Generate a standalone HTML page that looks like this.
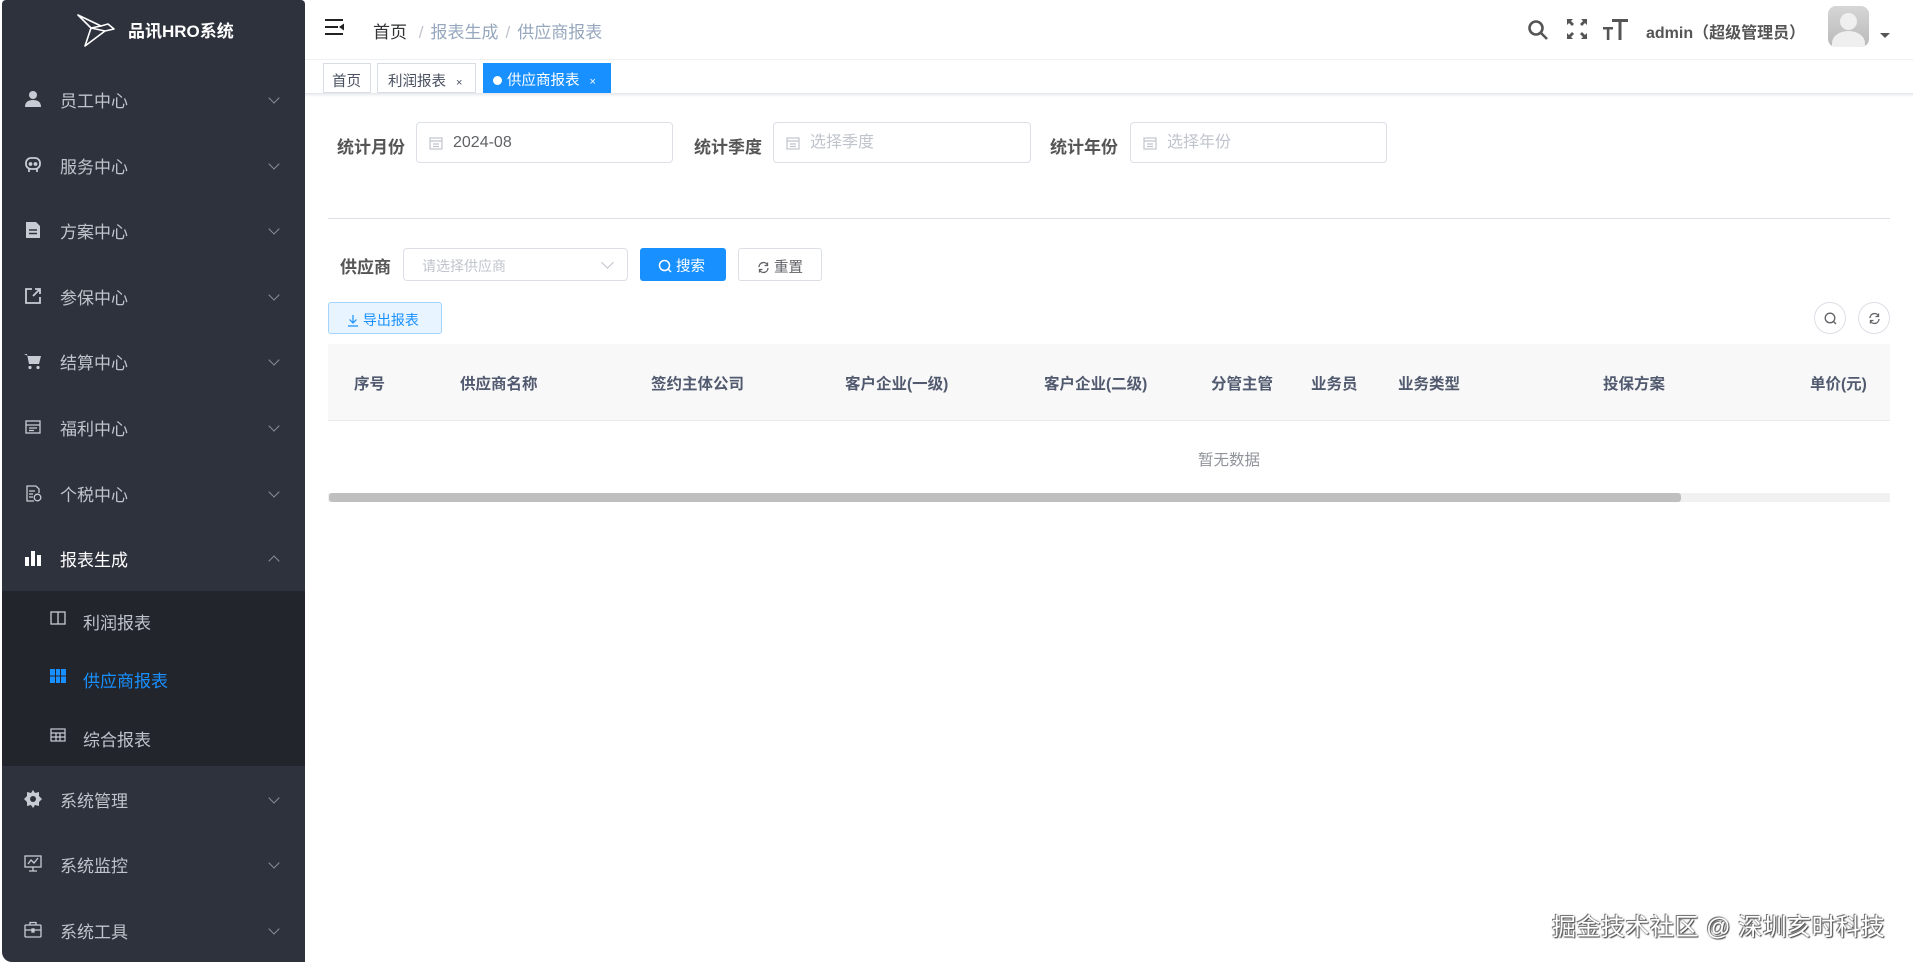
<!DOCTYPE html>
<html><head><meta charset="utf-8"><style>
*{box-sizing:border-box;margin:0;padding:0}
body{width:1913px;height:962px;overflow:hidden;background:#fff;font-family:"Liberation Sans","Noto Sans CJK SC",sans-serif;position:relative}
.a{position:absolute}
#sb{left:2px;top:0;width:303px;height:962px;background:#2e323d;border-radius:4px 4px 0 10px}
.mi{position:absolute;left:0;width:303px;height:66px;color:#bfc4cc;font-size:17px;display:flex;align-items:center}
.mi .ic{position:absolute;left:22px;top:24px;width:18px;height:18px}
.mi .t{position:absolute;left:58px}
.mi .ch{position:absolute;left:268px;top:28px;width:8px;height:8px;border-right:1.3px solid #8a909a;border-bottom:1.3px solid #8a909a;transform:rotate(45deg)}
.sub{position:absolute;left:0;width:303px;height:58px;color:#bfc4cc;font-size:17px}
.sub .t{position:absolute;left:81px;top:18px}
.lbl{font-size:17px;font-weight:bold;color:#555}
.inp{border:1px solid #dcdfe6;border-radius:4px;height:41px;font-size:16px;color:#606266}
.inp .v{position:absolute;left:36px;top:0;line-height:39px}
.th{position:absolute;top:372px;font-size:15.5px;font-weight:bold;color:#515a6e}
</style></head><body>
<div id="sb" class="a">
 <svg class="a" style="left:73px;top:12px" width="40" height="36" viewBox="0 0 40 36" fill="none" stroke="#fff" stroke-width="1.6" stroke-linejoin="round"><path d="M3 3 L26 14 L33 12 L39 17 L30 19 L10 34 L16 16 Z M3 3 L16 16 L26 14 M16 16 L30 19"/></svg>
 <div class="a" style="left:126px;top:17px;color:#fff;font-size:17px;font-weight:bold">品讯HRO系统</div>

 <div class="mi" style="top:66px"><svg class="ic" viewBox="0 0 18 18" fill="#c7ccd4"><circle cx="9" cy="5" r="4"/><path d="M1 17 Q1 10 9 10 Q17 10 17 17Z"/></svg><span class="t">员工中心</span><i class="ch"></i></div>
 <div class="mi" style="top:132px"><svg class="ic" viewBox="0 0 18 18" fill="none" stroke="#c7ccd4" stroke-width="1.8"><rect x="2" y="2" width="14" height="11" rx="5"/><path d="M5 16 L5 13 M13 16 L13 13"/><circle cx="6.5" cy="8" r="1" fill="#c7ccd4"/><circle cx="11.5" cy="8" r="1" fill="#c7ccd4"/></svg><span class="t">服务中心</span><i class="ch"></i></div>
 <div class="mi" style="top:197px"><svg class="ic" viewBox="0 0 18 18" fill="#c7ccd4"><path d="M2 1 L12 1 L16 5 L16 17 L2 17Z"/><path d="M5 9 H13 M5 12.5 H13" stroke="#2e323d" stroke-width="1.6"/></svg><span class="t">方案中心</span><i class="ch"></i></div>
 <div class="mi" style="top:263px"><svg class="ic" viewBox="0 0 18 18" fill="none" stroke="#c7ccd4" stroke-width="1.8"><path d="M8 2 H2 V16 H16 V10 M9 9 L16 2 M11 2 H16 V7"/></svg><span class="t">参保中心</span><i class="ch"></i></div>
 <div class="mi" style="top:328px"><svg class="ic" viewBox="0 0 18 18" fill="#c7ccd4"><path d="M0 2 H3 L5 12 H15 L17 4 H4" /><circle cx="6" cy="15.5" r="1.6"/><circle cx="14" cy="15.5" r="1.6"/></svg><span class="t">结算中心</span><i class="ch"></i></div>
 <div class="mi" style="top:394px"><svg class="ic" viewBox="0 0 18 18" fill="none" stroke="#c7ccd4" stroke-width="1.3"><rect x="2" y="3" width="14" height="12"/><path d="M2 7 H16 M5 10 H13 M5 12.5 H10"/></svg><span class="t">福利中心</span><i class="ch"></i></div>
 <div class="mi" style="top:460px"><svg class="ic" viewBox="0 0 18 18" fill="none" stroke="#c7ccd4" stroke-width="1.3"><path d="M12 2 H3 V17 H10 M12 2 L15 5 V9"/><path d="M5 7 H11 M5 10 H9 M5 13 H9"/><circle cx="13.5" cy="13.5" r="3.3"/></svg><span class="t">个税中心</span><i class="ch"></i></div>
 <div class="mi" style="top:525px;color:#fff"><svg class="ic" viewBox="0 0 18 18" fill="#fff"><rect x="1" y="8" width="4" height="9"/><rect x="7" y="2" width="4" height="15"/><rect x="13" y="6" width="4" height="11"/></svg><span class="t">报表生成</span><i class="ch" style="transform:rotate(225deg);top:32px"></i></div>
 <div class="a" style="left:0;top:591px;width:303px;height:175px;background:#22252c">
  <div class="sub" style="top:0"><svg class="a" style="left:48px;top:20px" width="16" height="14" fill="none" stroke="#c7ccd4" stroke-width="1.3"><rect x="1" y="1" width="14" height="12"/><path d="M8 1 V13"/></svg><span class="t">利润报表</span></div>
  <div class="sub" style="top:58px;color:#1890ff"><svg class="a" style="left:48px;top:20px" width="16" height="14"><rect width="16" height="14" fill="#1890ff"/><path d="M0 7 H16 M5.5 0 V14 M10.5 0 V14" stroke="#22252c" stroke-width="1"/></svg><span class="t">供应商报表</span></div>
  <div class="sub" style="top:117px"><svg class="a" style="left:48px;top:20px" width="16" height="14" fill="none" stroke="#c7ccd4" stroke-width="1.2"><rect x="1" y="1" width="14" height="12"/><path d="M1 5 H15 M1 9 H15 M6 5 V13 M10 5 V13"/></svg><span class="t">综合报表</span></div>
 </div>
 <div class="mi" style="top:766px"><svg class="ic" viewBox="0 0 18 18" fill="#c7ccd4"><path d="M9 0 L11 3 L15 2 L15 6 L18 9 L15 12 L15 16 L11 15 L9 18 L7 15 L3 16 L3 12 L0 9 L3 6 L3 2 L7 3Z"/><circle cx="9" cy="9" r="3" fill="#2e323d"/></svg><span class="t">系统管理</span><i class="ch"></i></div>
 <div class="mi" style="top:831px"><svg class="ic" viewBox="0 0 18 18" fill="none" stroke="#c7ccd4" stroke-width="1.3"><rect x="1" y="1" width="16" height="11"/><path d="M4 9 L7 5 L10 8 L14 3 M9 12 V16 M5 16 H13"/></svg><span class="t">系统监控</span><i class="ch"></i></div>
 <div class="mi" style="top:897px"><svg class="ic" viewBox="0 0 18 18" fill="none" stroke="#c7ccd4" stroke-width="1.3"><rect x="1" y="4" width="16" height="12" rx="1"/><path d="M6 4 V1.5 H12 V4 M1 9 H17"/><rect x="8" y="8" width="2" height="3" fill="#c7ccd4"/></svg><span class="t">系统工具</span><i class="ch"></i></div>
</div>

<svg class="a" style="left:325px;top:19px" width="20" height="16"><path d="M0 1 H18 M0 8 H13 M0 15 H18" stroke="#222" stroke-width="2"/><path d="M14 8 L19 4.5 V11.5Z" fill="#222"/></svg>
<div class="a" style="left:373px;top:18px;font-size:17px;color:#303133">首页 <span style="color:#c0c4cc;margin:0 7px">/</span><span style="color:#97a8be">报表生成</span><span style="color:#c0c4cc;margin:0 7px">/</span><span style="color:#97a8be">供应商报表</span></div>
<svg class="a" style="left:1527px;top:19px" width="22" height="22" fill="none" stroke="#555" stroke-width="2.6"><circle cx="9" cy="9" r="6.5"/><path d="M14 14 L20 20"/></svg>
<svg class="a" style="left:1566px;top:18px" width="22" height="22" fill="#555"><path d="M1 1 H7 L5 3 L8 6 L6 8 L3 5 L1 7Z M21 1 H15 L17 3 L14 6 L16 8 L19 5 L21 7Z M1 21 H7 L5 19 L8 16 L6 14 L3 17 L1 15Z M21 21 H15 L17 19 L14 16 L16 14 L19 17 L21 15Z"/></svg>
<svg class="a" style="left:1603px;top:17px" width="26" height="24" fill="#555"><rect x="0" y="10" width="10" height="2.5"/><rect x="3.8" y="10" width="2.6" height="13"/><rect x="9" y="2" width="16" height="3"/><rect x="15.5" y="2" width="3" height="21"/></svg>
<div class="a" style="left:1646px;top:19px;font-size:16px;font-weight:bold;color:#555">admin（超级管理员）</div>
<div class="a" style="left:1828px;top:6px;width:41px;height:41px;border-radius:8px;background:linear-gradient(#d6d6d6,#b9b9b9);overflow:hidden"><div class="a" style="left:12px;top:7px;width:17px;height:17px;border-radius:50%;background:#efefef"></div><div class="a" style="left:4px;top:25px;width:33px;height:24px;border-radius:50% 50% 0 0;background:#efefef"></div></div>
<div class="a" style="left:1880px;top:33px;border:5px solid transparent;border-top:5px solid #555"></div>
<div class="a" style="left:305px;top:59px;width:1608px;height:1px;background:#eef0f3"></div>
<div class="a" style="left:323px;top:63px;width:48px;height:30px;border:1px solid #d8dce5;font-size:14.5px;color:#495060;padding:6px 0 0 8px">首页</div>
<div class="a" style="left:377px;top:63px;width:99px;height:30px;border:1px solid #d8dce5;font-size:14.5px;color:#495060;padding:6px 0 0 10px">利润报表 <span style="font-size:11px;margin-left:6px">×</span></div>
<div class="a" style="left:483px;top:63px;width:128px;height:30px;background:#1890ff;font-size:14.5px;color:#fff;padding:6px 0 0 10px"><span style="display:inline-block;width:9px;height:9px;border-radius:50%;background:#fff;margin-right:5px"></span>供应商报表 <span style="font-size:11px;margin-left:6px">×</span></div>
<div class="a" style="left:305px;top:93px;width:1608px;height:4px;background:linear-gradient(#e4e6ea,#fff)"></div>

<div class="a lbl" style="left:337px;top:133px">统计月份</div>
<div class="a inp" style="left:416px;top:122px;width:257px"><svg class="a" style="left:12px;top:13px" width="14" height="14" fill="none" stroke="#c0c4cc" stroke-width="1.2"><rect x="1" y="2" width="12" height="11"/><path d="M1 5 H13 M4 8 H10 M4 10.5 H10"/></svg><span class="v">2024-08</span></div>
<div class="a lbl" style="left:694px;top:133px">统计季度</div>
<div class="a inp" style="left:773px;top:122px;width:258px;color:#c0c4cc"><svg class="a" style="left:12px;top:13px" width="14" height="14" fill="none" stroke="#c0c4cc" stroke-width="1.2"><rect x="1" y="2" width="12" height="11"/><path d="M1 5 H13 M4 8 H10 M4 10.5 H10"/></svg><span class="v">选择季度</span></div>
<div class="a lbl" style="left:1050px;top:133px">统计年份</div>
<div class="a inp" style="left:1130px;top:122px;width:257px;color:#c0c4cc"><svg class="a" style="left:12px;top:13px" width="14" height="14" fill="none" stroke="#c0c4cc" stroke-width="1.2"><rect x="1" y="2" width="12" height="11"/><path d="M1 5 H13 M4 8 H10 M4 10.5 H10"/></svg><span class="v">选择年份</span></div>
<div class="a" style="left:328px;top:218px;width:1562px;height:1px;background:#dcdfe6"></div>

<div class="a lbl" style="left:340px;top:253px">供应商</div>
<div class="a inp" style="left:403px;top:248px;width:225px;height:33px;font-size:14px;color:#c0c4cc"><span class="a" style="left:18px;top:7px">请选择供应商</span><i class="a" style="left:199px;top:9px;width:9px;height:9px;border-right:1.2px solid #c0c4cc;border-bottom:1.2px solid #c0c4cc;transform:rotate(45deg)"></i></div>
<div class="a" style="left:640px;top:248px;width:86px;height:33px;background:#1890ff;border-radius:3px;color:#fff;font-size:14.5px;padding:7px 0 0 18px"><svg style="vertical-align:-2px" width="14" height="14" fill="none" stroke="#fff" stroke-width="1.5"><circle cx="6.5" cy="6.5" r="5"/><path d="M10 10 L13 13"/></svg> 搜索</div>
<div class="a" style="left:738px;top:248px;width:84px;height:33px;border:1px solid #dcdfe6;border-radius:3px;color:#606266;font-size:14.5px;padding:7px 0 0 18px"><svg style="vertical-align:-2px" width="13" height="13" fill="none" stroke="#606266" stroke-width="1.3"><path d="M2 6 A4.5 4.5 0 0 1 10.5 4 M11 7 A4.5 4.5 0 0 1 2.5 9"/><path d="M10.5 1.5 V4.5 H7.5 M2.5 11.5 V8.5 H5.5"/></svg> 重置</div>
<div class="a" style="left:328px;top:302px;width:114px;height:32px;background:#e8f4ff;border:1px solid #a3d3ff;border-radius:3px;color:#1890ff;font-size:14px;padding:7px 0 0 18px"><svg style="vertical-align:-2px" width="12" height="13" fill="none" stroke="#1890ff" stroke-width="1.2"><path d="M6 1 V9 M2.5 5.5 L6 9 L9.5 5.5 M1 12 H11"/></svg> 导出报表</div>
<div class="a" style="left:1814px;top:302px;width:32px;height:32px;border:1px solid #dcdfe6;border-radius:50%"><svg class="a" style="left:9px;top:9px" width="14" height="14" fill="none" stroke="#606266" stroke-width="1.3"><circle cx="6" cy="6" r="4.8"/><path d="M9.5 9.5 L12 12"/></svg></div>
<div class="a" style="left:1858px;top:302px;width:32px;height:32px;border:1px solid #dcdfe6;border-radius:50%"><svg class="a" style="left:9px;top:9px" width="13" height="13" fill="none" stroke="#606266" stroke-width="1.3"><path d="M2 6 A4.5 4.5 0 0 1 10.5 4 M11 7 A4.5 4.5 0 0 1 2.5 9"/><path d="M10.5 1.5 V4.5 H7.5 M2.5 11.5 V8.5 H5.5"/></svg></div>

<div class="a" style="left:328px;top:344px;width:1562px;height:77px;background:#f8f8f9;border-bottom:1px solid #e8eaec"></div>
<div class="th" style="left:354px">序号</div>
<div class="th" style="left:460px">供应商名称</div>
<div class="th" style="left:651px">签约主体公司</div>
<div class="th" style="left:845px">客户企业(一级)</div>
<div class="th" style="left:1044px">客户企业(二级)</div>
<div class="th" style="left:1211px">分管主管</div>
<div class="th" style="left:1311px">业务员</div>
<div class="th" style="left:1398px">业务类型</div>
<div class="th" style="left:1603px">投保方案</div>
<div class="th" style="left:1810px">单价(元)</div>
<div class="a" style="left:1198px;top:448px;font-size:15.5px;color:#909399">暂无数据</div>
<div class="a" style="left:328px;top:493px;width:1562px;height:9px;background:#f1f1f1"></div>
<div class="a" style="left:329px;top:493px;width:1352px;height:9px;background:#bfbfbf;border-radius:3px"></div>

<div class="a" style="left:1552px;top:907px;font-size:24px;color:#fff;text-shadow:-1px -1px 0 #777,1px 1px 1px #444,0 0 2px #666;letter-spacing:0.5px">掘金技术社区 @ 深圳亥时科技</div>
</body></html>
